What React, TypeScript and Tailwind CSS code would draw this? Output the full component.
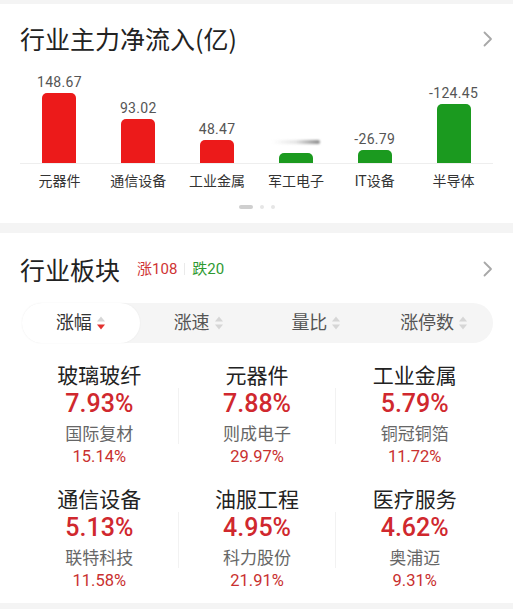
import React from 'react';

const flows = [
  { name: '元器件', value: 148.67, label: '148.67' },
  { name: '通信设备', value: 93.02, label: '93.02' },
  { name: '工业金属', value: 48.47, label: '48.47' },
  { name: '军工电子', value: -21.3, label: null },
  { name: 'IT设备', value: -26.79, label: '-26.79' },
  { name: '半导体', value: -124.45, label: '-124.45' },
];

const MAX_FLOW = 148.67;
const BAR_MAX = 70;

const tabs = ['涨幅', '涨速', '量比', '涨停数'];

const sectors = [
  [
    { name: '玻璃玻纤', pct: '7.93%', lead: '国际复材', leadPct: '15.14%' },
    { name: '元器件', pct: '7.88%', lead: '则成电子', leadPct: '29.97%' },
    { name: '工业金属', pct: '5.79%', lead: '铜冠铜箔', leadPct: '11.72%' },
  ],
  [
    { name: '通信设备', pct: '5.13%', lead: '联特科技', leadPct: '11.58%' },
    { name: '油服工程', pct: '4.95%', lead: '科力股份', leadPct: '21.91%' },
    { name: '医疗服务', pct: '4.62%', lead: '奥浦迈', leadPct: '9.31%' },
  ],
];

const Chevron = () => (
  <svg width="10" height="16" viewBox="0 0 10 16" fill="none">
    <polyline points="1.5,1.5 8,8 1.5,14.5" stroke="#a8a8a8" strokeWidth="1.8" strokeLinecap="round" strokeLinejoin="round" />
  </svg>
);

const SortIcon = ({ active }: { active: boolean }) => (
  <svg width="10" height="16" viewBox="0 0 10 16">
    <polygon points="1,6.5 5,1.5 9,6.5" fill="#d6d6d6" />
    <polygon points="1,9.5 9,9.5 5,14.5" fill={active ? '#e2312f' : '#d6d6d6'} />
  </svg>
);

export default function App() {
  return (
    <div className="w-[513px] h-[609px] overflow-hidden bg-[#f4f4f4] pt-[4px] font-[family-name:Roboto,'Noto_Sans_CJK_SC',sans-serif]">
      {/* Net inflow card */}
      <div className="bg-white px-[20px] pt-[18px] pb-[14px]">
        <div className="h-[33px] flex items-center justify-between">
          <span className="text-[25px] leading-[33px] text-[#222] font-['Noto_Sans_CJK_SC',sans-serif]">行业主力净流入(亿)</span>
          <Chevron />
        </div>

        <div className="h-[108px] flex items-end">
          {flows.map(f => (
            <div key={f.name} className="flex-1 flex flex-col items-center justify-end">
              <div className="h-[16px] mb-[3px] flex items-center justify-center text-[14px] leading-[16px] text-[#555] tracking-[0.3px]">
                {f.label ?? <div className="w-[48px] h-[4px] rounded-full bg-gradient-to-r from-transparent via-[#e6e6e6] to-[#8a8a8a] blur-[1px]" />}
              </div>
              <div
                className={`w-[34px] rounded-t-[5px] ${f.value >= 0 ? 'bg-[#ec1a1a]' : 'bg-[#1b9a1f]'}`}
                style={{ height: Math.round((Math.abs(f.value) / MAX_FLOW) * BAR_MAX) }}
              />
            </div>
          ))}
        </div>
        <div className="h-px bg-[#eeeeee]" />

        <div className="mt-[7px] flex">
          {flows.map(f => (
            <div key={f.name} className="flex-1 text-center text-[14px] leading-[20px] text-[#333]">{f.name}</div>
          ))}
        </div>

        <div className="mt-[14px] flex justify-center gap-[7px]">
          <div className="w-[14px] h-[4px] rounded-full bg-[#cfcfcf]" />
          <div className="w-[4px] h-[4px] rounded-full bg-[#e6e6e6]" />
          <div className="w-[4px] h-[4px] rounded-full bg-[#e6e6e6]" />
        </div>
      </div>

      {/* Industry sector card */}
      <div className="mt-[10px] bg-white px-[20px] pt-[20px] pb-[11px]">
        <div className="h-[32px] flex items-center justify-between">
          <div className="flex items-center">
            <span className="text-[25px] leading-[32px] text-[#222] font-['Noto_Sans_CJK_SC',sans-serif]">行业板块</span>
            <span className="ml-[17px] text-[15px] text-[#cf3434]">涨108</span>
            <span className="mx-[7px] w-px h-[12px] bg-[#eaeaea]" />
            <span className="text-[15px] text-[#2f9a32]">跌20</span>
          </div>
          <Chevron />
        </div>

        <div className="mt-[18px] ml-[2px] h-[40px] rounded-full bg-[#f5f5f5] flex">
          {tabs.map((t, i) => (
            <div
              key={t}
              className={`flex-1 h-full rounded-full flex items-center justify-center gap-[4px] ${i === 0 ? 'bg-white shadow-[0_0_2px_rgba(0,0,0,0.06)] text-[#333]' : 'text-[#555]'}`}
            >
              <span className="text-[18px] leading-[24px]">{t}</span>
              <SortIcon active={i === 0} />
            </div>
          ))}
        </div>

        <div className="mt-[20px] ml-[1px] flex flex-col gap-[19px]">
          {sectors.map((row, r) => (
            <div key={r} className="flex">
              {row.map((s, i) => (
                <React.Fragment key={s.name}>
                  {i > 0 && <div className="w-px h-[56px] self-center bg-[#f2f2f2]" />}
                  <div className="flex-1 flex flex-col items-center">
                    <div className="h-[27px] text-[21px] leading-[27px] text-[#222]">{s.name}</div>
                    <div className="h-[28px] text-[25px] leading-[28px] font-medium text-[#d0282e]">{s.pct}</div>
                    <div className="mt-[4px] h-[24px] text-[17px] leading-[24px] text-[#666]">{s.lead}</div>
                    <div className="h-[22px] text-[16.5px] leading-[22px] text-[#c9302f]">{s.leadPct}</div>
                  </div>
                </React.Fragment>
              ))}
            </div>
          ))}
        </div>
      </div>
    </div>
  );
}
